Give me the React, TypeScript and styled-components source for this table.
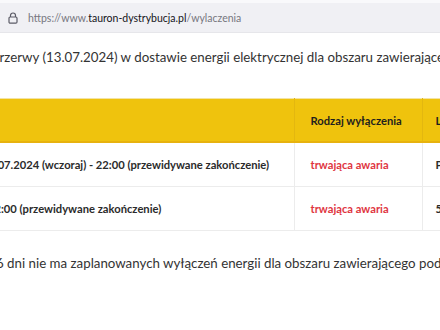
import styled, { createGlobalStyle } from 'styled-components'

const GlobalStyle = createGlobalStyle`
  body {
    margin: 0;
    background: #ffffff;
    overflow: hidden;
  }
`

const rows = [
  {
    time: '12.07.2024 (wczoraj) - 22:00 (przewidywane zakończenie)',
    shift: -18,
    kind: 'trwająca awaria',
    place: 'Pcim',
  },
  {
    time: '22:00 (przewidywane zakończenie)',
    shift: -12,
    kind: 'trwająca awaria',
    place: '5',
  },
]

const LockIcon: React.FC = () => (
  <svg width="10" height="12" viewBox="0 0 10 12" fill="none">
    <path d="M2.5 5V3.5a2.5 2.5 0 0 1 5 0V5" stroke="#5b5b66" strokeWidth="1.2" />
    <rect x="1" y="5" width="8" height="6.2" rx="1.2" stroke="#5b5b66" strokeWidth="1.2" />
  </svg>
)

const App: React.FC = () => {
  return (
    <>
      <GlobalStyle />
      <Screen>
        <Toolbar>
          <AddressField>
            <LockIcon />
            <Url>
              https://www.<Domain>tauron-dystrybucja.pl</Domain>/wylaczenia
            </Url>
          </AddressField>
        </Toolbar>
        <Page>
          <Lead $shift={-8}>
            przerwy (13.07.2024) w dostawie energii elektrycznej dla obszaru zawierającego podany adres
          </Lead>
          <Table>
            <colgroup>
              <col style={{ width: 294 }} />
              <col style={{ width: 128 }} />
              <col style={{ width: 200 }} />
            </colgroup>
            <thead>
              <tr>
                <HeadCell />
                <HeadCell>Rodzaj wyłączenia</HeadCell>
                <HeadCell $pad={13}>Lokalizacja</HeadCell>
              </tr>
            </thead>
            <tbody>
              {rows.map((row, i) => (
                <tr key={i}>
                  <TimeCell $shift={row.shift}>{row.time}</TimeCell>
                  <KindCell>{row.kind}</KindCell>
                  <BodyCell $pad={13}>{row.place}</BodyCell>
                </tr>
              ))}
            </tbody>
          </Table>
          <Note $shift={-4}>
            6 dni nie ma zaplanowanych wyłączeń energii dla obszaru zawierającego podany adres
          </Note>
        </Page>
      </Screen>
    </>
  )
}

const Screen = styled.div`
  width: 440px;
  height: 330px;
  overflow: hidden;
  font-family: Lato, 'Noto Sans', sans-serif;
`

const Toolbar = styled.div`
  height: 33px;
  background: #f0f0f4;
  border-top: 3px solid #f9f9fb;
  border-bottom: 1px solid #e6e6ea;
  box-sizing: border-box;
  display: flex;
  align-items: center;
`

const AddressField = styled.div`
  display: flex;
  align-items: center;
  gap: 10px;
  padding-left: 8px;
`

const Url = styled.span`
  font-size: 10.5px;
  color: #77777f;
  white-space: nowrap;
`

const Domain = styled.span`
  color: #15141a;
`

const Page = styled.div`
  padding-top: 14px;
  width: 440px;
  overflow: hidden;
`

type ShiftProps = { $shift: number }

const Lead = styled.p<ShiftProps>`
  margin: 0 0 31px;
  font-size: 13.3px;
  line-height: 20px;
  color: #333333;
  white-space: nowrap;
  text-indent: ${(p) => p.$shift}px;
`

const Table = styled.table`
  border-collapse: collapse;
  table-layout: fixed;
  width: 622px;
  font-size: 11.2px;
  font-weight: 700;
`

type PadProps = { $pad?: number }

const HeadCell = styled.th<PadProps>`
  height: 42px;
  padding: 0 0 0 ${(p) => p.$pad ?? 16}px;
  background: #efc30d;
  border-top: 1px solid #f3e3a4;
  border-bottom: 2px solid #e7b20e;
  border-right: 1px solid #e3b70f;
  text-align: left;
  color: #1e1e1e;
  white-space: nowrap;
`

const BodyCell = styled.td<PadProps>`
  height: 43px;
  padding: 0 0 0 ${(p) => p.$pad ?? 16}px;
  border-bottom: 1px solid #ececec;
  border-right: 1px solid #ececec;
  color: #2b2b2b;
  white-space: nowrap;
  overflow: hidden;
`

const TimeCell = styled(BodyCell)<ShiftProps>`
  padding: 0;
  text-indent: ${(p) => p.$shift}px;
`

const KindCell = styled(BodyCell)`
  color: #e0363f;
`

const Note = styled.p<ShiftProps>`
  margin: 22px 0 0;
  font-size: 13.3px;
  line-height: 20px;
  color: #333333;
  white-space: nowrap;
  text-indent: ${(p) => p.$shift}px;
`

export default App
